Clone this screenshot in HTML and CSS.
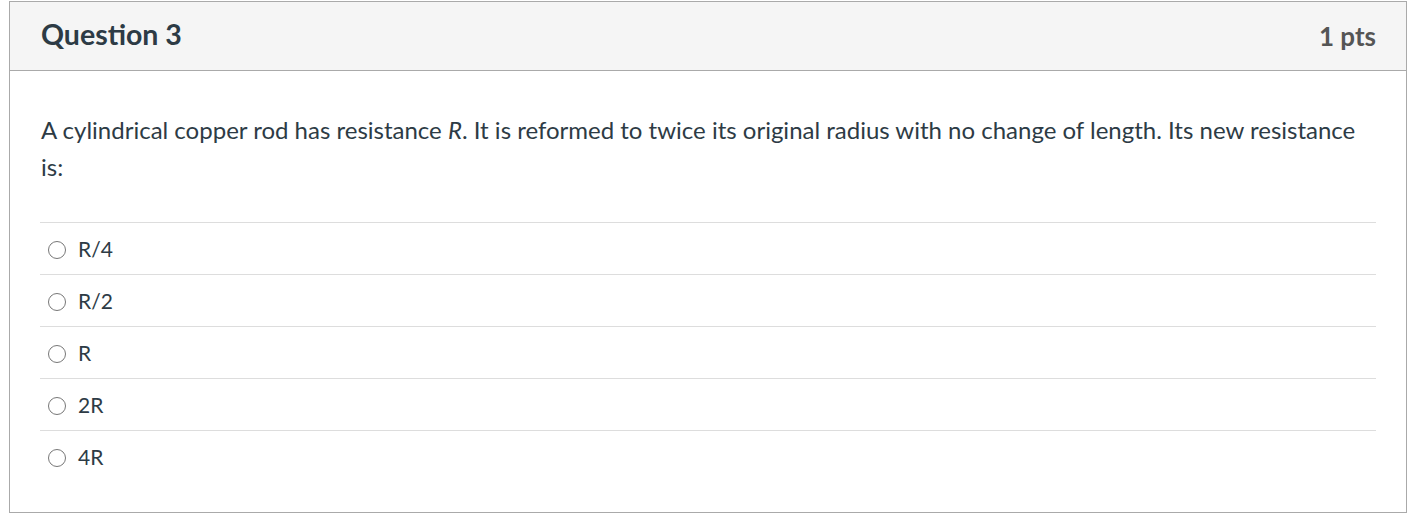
FILE: index.html
```html
<!DOCTYPE html>
<html>
<head>
<meta charset="utf-8">
<link rel="stylesheet" href="styles.css">
</head>
<body>
<div class="card">
  <div class="header">
    <h2 class="title">Question 3</h2>
    <div class="pts">1 pts</div>
  </div>
  <div class="content">
    <p class="question">A cylindrical copper rod has resistance <i>R</i>. It is reformed to twice its original radius with no change of length. Its new resistance is:</p>
    <div class="answers">
      <label class="answer"><span class="radio"></span><span class="label">R/4</span></label>
      <label class="answer"><span class="radio"></span><span class="label">R/2</span></label>
      <label class="answer"><span class="radio"></span><span class="label">R</span></label>
      <label class="answer"><span class="radio"></span><span class="label">2R</span></label>
      <label class="answer"><span class="radio"></span><span class="label">4R</span></label>
    </div>
  </div>
</div>
</body>
</html>
```
FILE: styles.css
```css
html, body {
  margin: 0;
  padding: 0;
  background: #fff;
}
body {
  font-family: Lato, "Open Sans", sans-serif;
  color: #2d3b45;
}
.card {
  margin: 1px 0 0 9px;
  width: 1396px;
  height: 510px;
  border: 1px solid #aaa;
  display: flex;
  flex-direction: column;
}
.header {
  background: #f5f5f5;
  border-bottom: 1px solid #aaa;
  height: 68px;
  display: flex;
  align-items: center;
  justify-content: space-between;
  padding: 0 30px 0 31px;
}
.title {
  margin: 0 0 5px 0;
  font-size: 28.5px;
  font-weight: 700;
  color: #2d3b45;
}
.pts {
  font-size: 26px;
  font-weight: 700;
  color: #555;
}
.content {
  padding: 40px 30px 0 30px;
}
.question {
  margin: 0 0 0 1px;
  font-size: 24px;
  line-height: 37px;
}
.answers {
  margin-top: 37px;
}
.answer {
  display: flex;
  align-items: center;
  height: 51px;
  border-top: 1px solid #ddd;
}
.radio {
  width: 18px;
  height: 18px;
  border: 1.5px solid #777;
  border-radius: 50%;
  margin: 3px 12px 0 8px;
  box-sizing: border-box;
}
.label {
  font-size: 21px;
}
```
